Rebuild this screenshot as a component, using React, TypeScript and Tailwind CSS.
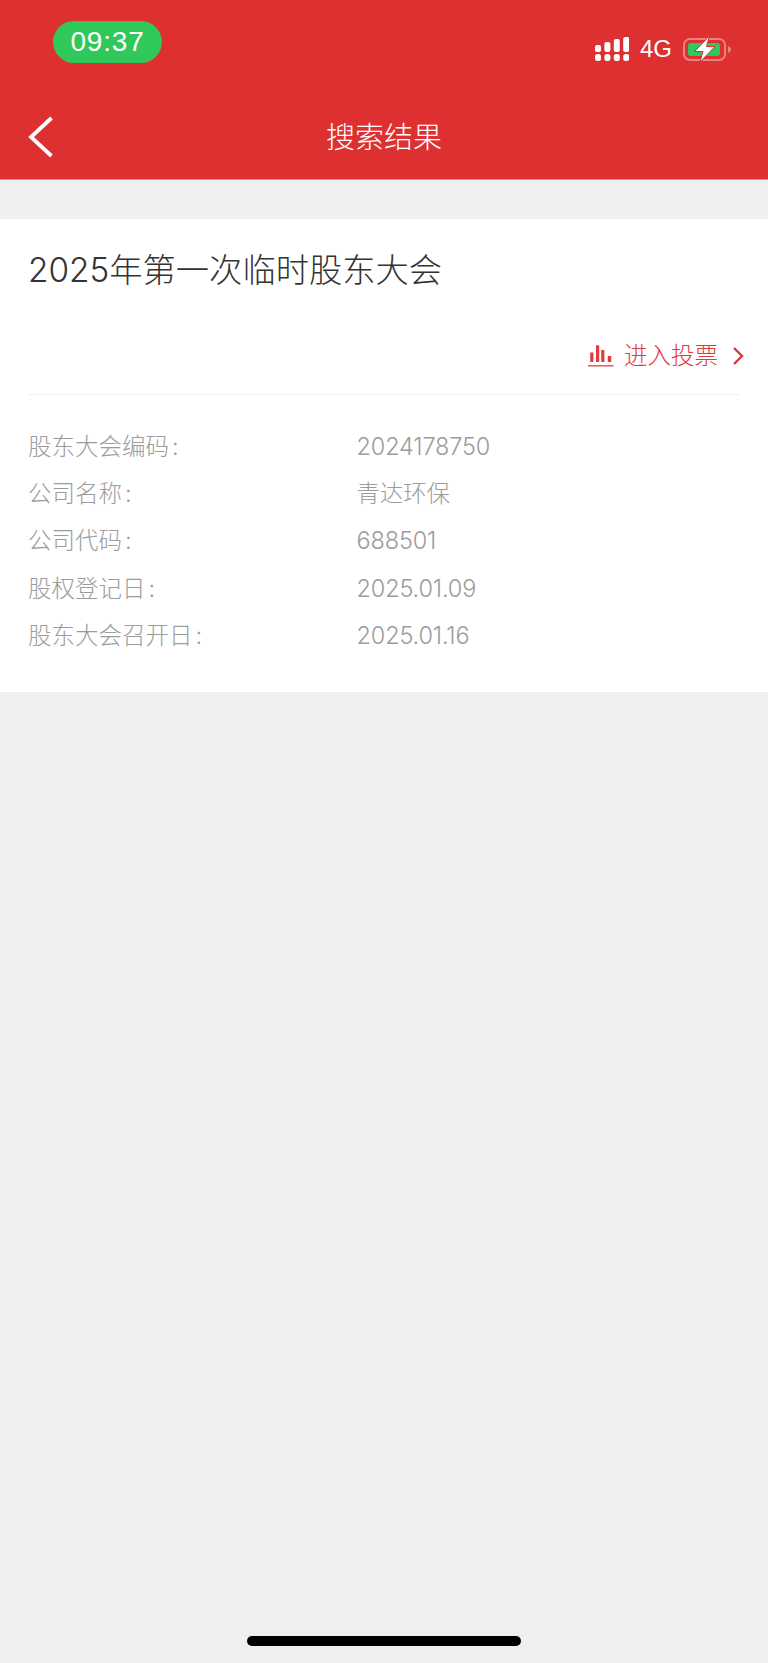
const rows = [
  { label: '股东大会编码', value: '2024178750' },
  { label: '公司名称', value: '青达环保' },
  { label: '公司代码', value: '688501' },
  { label: '股权登记日', value: '2025.01.09' },
  { label: '股东大会召开日', value: '2025.01.16' },
]

// top and height of the upper signal bars
const signalBars = [
  [8, 7],
  [5, 10],
  [2, 13],
  [0, 15],
]

function SignalIcon() {
  return (
    <svg width="34" height="24" viewBox="0 0 34 24" fill="white">
      {signalBars.map(([y, h], i) => (
        <g key={i}>
          <rect x={i * 9.4} y={y} width="6" height={h} rx="2" />
          <rect x={i * 9.4} y="17" width="6" height="7" rx="2.5" />
        </g>
      ))}
    </svg>
  )
}

function BatteryIcon() {
  return (
    <svg width="50" height="26" viewBox="0 0 50 26" fill="none">
      <rect x="1" y="3" width="41" height="21" rx="6" stroke="white" strokeOpacity="0.4" strokeWidth="2" />
      <path d="M45 10c2 .7 3 2 3 3.5s-1 2.8-3 3.5z" fill="white" fillOpacity="0.4" />
      <rect x="5" y="7" width="32" height="13" rx="3" fill="#30c85a" />
      <path d="M26.5 0 L11.5 15.5 H20 L17 26 L32 10.5 H23.5 Z" fill="white" stroke="#de3030" strokeWidth="1" />
    </svg>
  )
}

function ChartIcon() {
  return (
    <svg width="26" height="23" viewBox="0 0 26 23" fill="#e23b3e">
      <rect x="2.2" y="7.5" width="3.2" height="9.5" />
      <rect x="8" y="0.3" width="3.2" height="16.7" />
      <rect x="13.2" y="5" width="3.2" height="12" />
      <rect x="19.8" y="11" width="3.4" height="6" />
      <rect x="0" y="20" width="25.5" height="1.6" fillOpacity="0.8" />
    </svg>
  )
}

export default function App() {
  return (
    <div
      className="flex min-h-[1663px] w-[768px] flex-col bg-[#efefef]"
      style={{ fontFamily: '"Liberation Sans", "Noto Sans CJK SC", sans-serif' }}
    >
      <header className="h-[180px] border-b border-[#ee8a8a] bg-[#de3030] text-white">
        <div className="flex h-[96px] items-start justify-between pl-[53px] pr-[35px]">
          <div className="mt-[21px] flex h-[42px] w-[109px] items-center justify-center rounded-[21px] bg-[#30c85a] text-[28px] tracking-[0.8px]">
            09:37
          </div>
          <div className="mt-[36px] flex items-center">
            <SignalIcon />
            <span className="ml-[11px] text-[24px] leading-[24px]">4G</span>
            <span className="ml-[11px] block">
              <BatteryIcon />
            </span>
          </div>
        </div>
        <div className="relative flex h-[83px] items-center justify-center">
          <svg className="absolute left-[27px] top-[19px]" width="28" height="44" viewBox="0 0 28 44" fill="none">
            <path d="M24.5 3 L4 22 L24.5 41" stroke="white" strokeWidth="3.8" />
          </svg>
          <span className="text-[29px] font-light leading-[40px]">搜索结果</span>
        </div>
      </header>

      <main className="mt-[39px] h-[473px] bg-white px-[28px]">
        <h1 className="pt-[29px] font-['Inter','Noto_Sans_CJK_SC',sans-serif] text-[33.3px] font-light leading-[44px] text-[#333333]">
          2025年第一次临时股东大会
        </h1>
        <div className="flex h-[103px] items-center justify-end border-b border-[#f0f0f0] pt-[26px]">
          <div className="-mr-[4px] flex items-center text-[#e03a3c]">
            <ChartIcon />
            <span className="ml-[10px] text-[23.5px] font-light leading-[32px]">进入投票</span>
            <svg className="ml-[14px]" width="12" height="20" viewBox="0 0 12 20" fill="none">
              <path d="M2 2 L10 10 L2 18" stroke="#d23a3c" strokeWidth="2.4" />
            </svg>
          </div>
        </div>
        <dl className="pt-[28px] font-['Inter','Noto_Sans_CJK_SC',sans-serif]">
          {rows.map((row) => (
            <div key={row.label} className="flex h-[47.2px] items-center text-[23.5px] font-light text-[#9c9c9c]">
              <dt className="w-[328.5px]">
                {row.label}
                <span className="ml-[3px]">:</span>
              </dt>
              <dd className="tracking-[-0.15px]">{row.value}</dd>
            </div>
          ))}
        </dl>
      </main>

      <div className="flex flex-1 items-end justify-center pb-[17px]">
        <div className="h-[10px] w-[274px] rounded-full bg-black" />
      </div>
    </div>
  )
}
